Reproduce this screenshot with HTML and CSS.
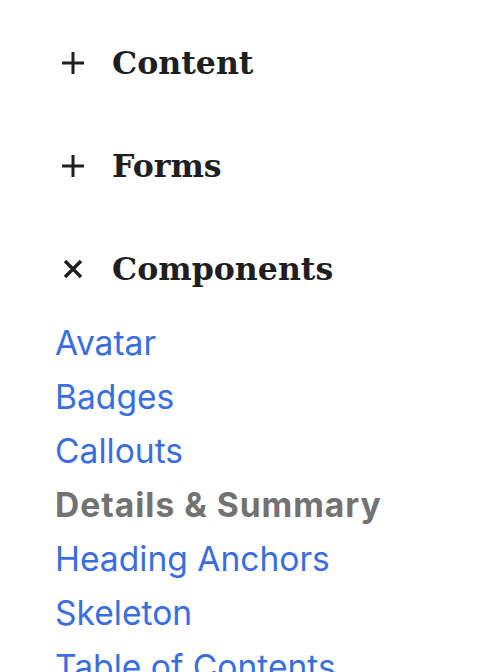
FILE: index.html
```html
<!DOCTYPE html>
<html lang="en">
<head>
  <meta charset="UTF-8" />
  <title>Docs nav</title>
  <link rel="stylesheet" href="styles.css">
</head>
<body>
<nav class="sidenav">
  <!-- ========== Secciones ========== -->
  <section class="grupo">
    <button class="grupo-toggle" type="button">
      <svg class="ico" viewBox="0 0 24 24"><path d="M12 1v22M1 12h22"/></svg>
      <span class="grupo-titulo">Content</span>
    </button>
  </section>

  <section class="grupo">
    <button class="grupo-toggle" type="button">
      <svg class="ico" viewBox="0 0 24 24"><path d="M12 1v22M1 12h22"/></svg>
      <span class="grupo-titulo">Forms</span>
    </button>
  </section>

  <section class="grupo abierto">
    <button class="grupo-toggle" type="button">
      <svg class="ico ico-x" viewBox="0 0 24 24"><path d="M4 4l16 16M20 4L4 20"/></svg>
      <span class="grupo-titulo">Components</span>
    </button>
    <ul class="enlaces">
      <li><a href="#">Avatar</a></li>
      <li><a href="#">Badges</a></li>
      <li><a href="#">Callouts</a></li>
      <li><a class="actual" href="#">Details &amp; Summary</a></li>
      <li><a href="#">Heading Anchors</a></li>
      <li><a href="#">Skeleton</a></li>
      <li><a href="#">Table of Contents</a></li>
    </ul>
  </section>
</nav>
</body>
</html>
```
FILE: styles.css
```css
:root{
  --texto:#1f1f1f; --enlace:#3a6ee0; --actual:#727272;
}
body{margin:0;background:#fff;font-family:Inter, "Noto Sans", sans-serif;}

/* ---------- Navegación ---------- */
.sidenav{padding:38px 0 0 55px}
.grupo{margin-bottom:54px}
.grupo-toggle{
  display:flex;align-items:center;gap:27px;padding:0 0 0 6px;border:none;background:none;
  cursor:pointer;color:var(--texto);
}
.ico{width:24px;height:24px;flex:none;stroke:var(--texto);stroke-width:3;fill:none}
.ico-x{stroke-width:3.4}
.grupo-titulo{font-family:"DejaVu Serif", serif;font-weight:bold;font-size:31.6px;line-height:49px}

.enlaces{list-style:none;margin:23px 0 0;padding:0}
.enlaces li{line-height:54px;font-size:33.6px}
.enlaces a{color:var(--enlace);text-decoration:none}
.enlaces a.actual{color:var(--actual);font-weight:bold;letter-spacing:1px}
```
